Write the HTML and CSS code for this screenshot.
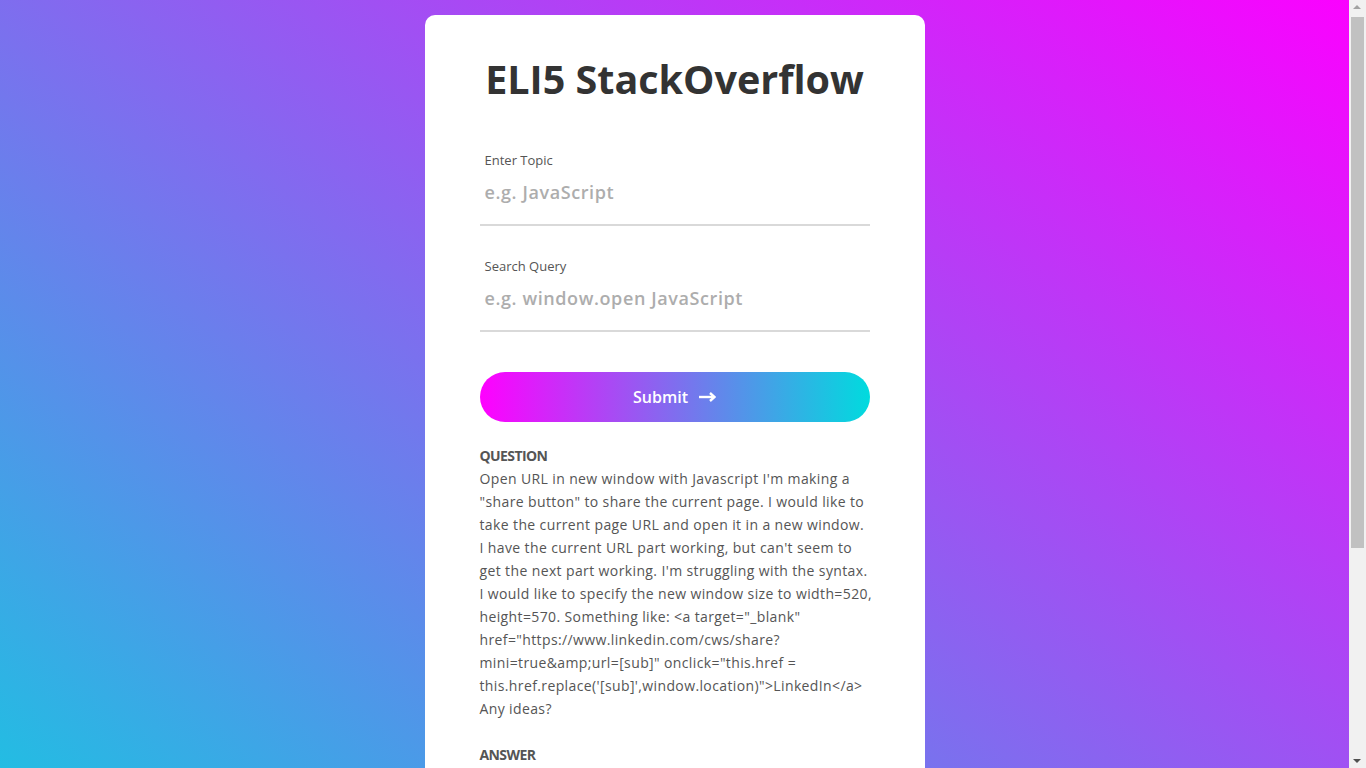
FILE: index.html
```html
<!DOCTYPE html>
<html lang="en">
<head>
<meta charset="utf-8">
<title>ELI5 StackOverflow</title>
<link rel="stylesheet" href="styles.css">
</head>
<body>
<main class="card">
  <h1 class="title">ELI5 StackOverflow</h1>
  <form class="form">
    <div class="field">
      <label class="label" for="topic">Enter Topic</label>
      <input class="input" id="topic" type="text" placeholder="e.g. JavaScript">
    </div>
    <div class="field field-second">
      <label class="label" for="query">Search Query</label>
      <input class="input" id="query" type="text" placeholder="e.g. window.open JavaScript">
    </div>
    <button class="submit" type="button">
      <span>Submit</span>
      <svg class="arrow" width="18" height="12" viewBox="0 0 18 12" aria-hidden="true">
        <path d="M1 6H15.5" stroke="#fff" stroke-width="2.4" fill="none"/>
        <path d="M12 2L16.5 6L12 10" stroke="#fff" stroke-width="2.4" fill="none" stroke-linejoin="miter"/>
      </svg>
    </button>
  </form>
  <section class="result">
    <h2 class="heading">QUESTION</h2>
    <p class="text text-question">Open URL in new window with Javascript I'm making a<br>"share button" to share the current page. I would like to<br>take the current page URL and open it in a new window.<br>I have the current URL part working, but can't seem to<br>get the next part working. I'm struggling with the syntax.<br>I would like to specify the new window size to width=520,<br>height=570. Something like: &lt;a target="_blank"<br>href="https://www.linkedin.com/cws/share?<br>mini=true&amp;amp;url=[sub]" onclick="this.href =<br>this.href.replace('[sub]',window.location)"&gt;LinkedIn&lt;/a&gt;<br>Any ideas?</p>
    <h2 class="heading heading-answer">ANSWER</h2>
    <p class="text">Don't use the target attribute at all. Instead, handle the click yourself: build the share URL from the current location, then call window.open(url, 'share', 'width=520,height=570') to open it in a sized popup window. Finally return false from the onclick handler, so the browser doesn't also follow the link in the current tab. Browsers only apply the width and height features when a new window is opened, not a new tab, so leave target out.</p>
  </section>
</main>
<div class="scrollbar" aria-hidden="true">
  <span class="scroll-arrow scroll-up"></span>
  <span class="scroll-thumb"></span>
  <span class="scroll-arrow scroll-down"></span>
</div>
</body>
</html>
```
FILE: styles.css
```css
html {
  margin: 0;
  padding: 0;
  min-height: 100%;
  background: linear-gradient(to top right, #00dbde, #fc00ff);
}
body {
  margin: 0;
  font-family: "Open Sans", "Liberation Sans", sans-serif;
  color: #555;
  display: flex;
  justify-content: center;
  padding: 15px 17px 15px 0;
  min-height: 1062px;
  box-sizing: border-box;
}
.card {
  width: 500px;
  box-sizing: border-box;
  background: #fff;
  border-radius: 10px;
  padding: 35px 55px 45px;
  align-self: flex-start;
}
.title {
  margin: 0;
  text-align: center;
  font-size: 39.5px;
  line-height: 58px;
  font-weight: 700;
  color: #333;
}
.form {
  display: flex;
  flex-direction: column;
  margin-top: 42px;
}
.field {
  display: flex;
  flex-direction: column;
}
.field-second {
  margin-top: 30px;
}
.label {
  font-size: 13px;
  line-height: 20px;
  color: #555;
  padding-left: 5px;
}
.input {
  height: 56px;
  box-sizing: border-box;
  border: none;
  border-bottom: 2px solid #d9d9d9;
  padding: 9px 5px 19px;
  font-family: inherit;
  font-size: 18px;
  line-height: 26px;
  letter-spacing: 0.6px;
  color: #333;
  outline: none;
  background: transparent;
}
.input::placeholder {
  color: #adadad;
  font-weight: 600;
}
.submit {
  margin-top: 40px;
  height: 50px;
  border: none;
  border-radius: 25px;
  background: linear-gradient(to right, #ff00ff, #00dbde);
  color: #fff;
  font-family: inherit;
  font-size: 16px;
  font-weight: 600;
  display: flex;
  align-items: center;
  justify-content: center;
  gap: 10px;
  cursor: pointer;
}
.arrow {
  display: block;
}
.result {
  margin-top: 22px;
  font-size: 14px;
  line-height: 23px;
}
.heading {
  margin: 0;
  font-size: 14px;
  line-height: 23px;
  font-weight: 700;
  color: #555;
  letter-spacing: -0.6px;
}
.heading-answer {
  margin-top: 23px;
}
.text {
  margin: 0;
  color: #555;
  letter-spacing: 0.38px;
}
.text-question {
  white-space: nowrap;
}
.scrollbar {
  position: fixed;
  top: 0;
  right: 0;
  width: 17px;
  height: 100vh;
  background: #f1f1f1;
}
.scroll-thumb {
  position: absolute;
  left: 2px;
  right: 2px;
  top: 17px;
  height: 531px;
  background: #c1c1c1;
}
.scroll-arrow {
  position: absolute;
  left: 4px;
  width: 0;
  height: 0;
  border-left: 4px solid transparent;
  border-right: 4px solid transparent;
}
.scroll-up {
  top: 5px;
  border-bottom: 4px solid #a3a3a3;
}
.scroll-down {
  bottom: 5px;
  border-top: 4px solid #505050;
}
```
